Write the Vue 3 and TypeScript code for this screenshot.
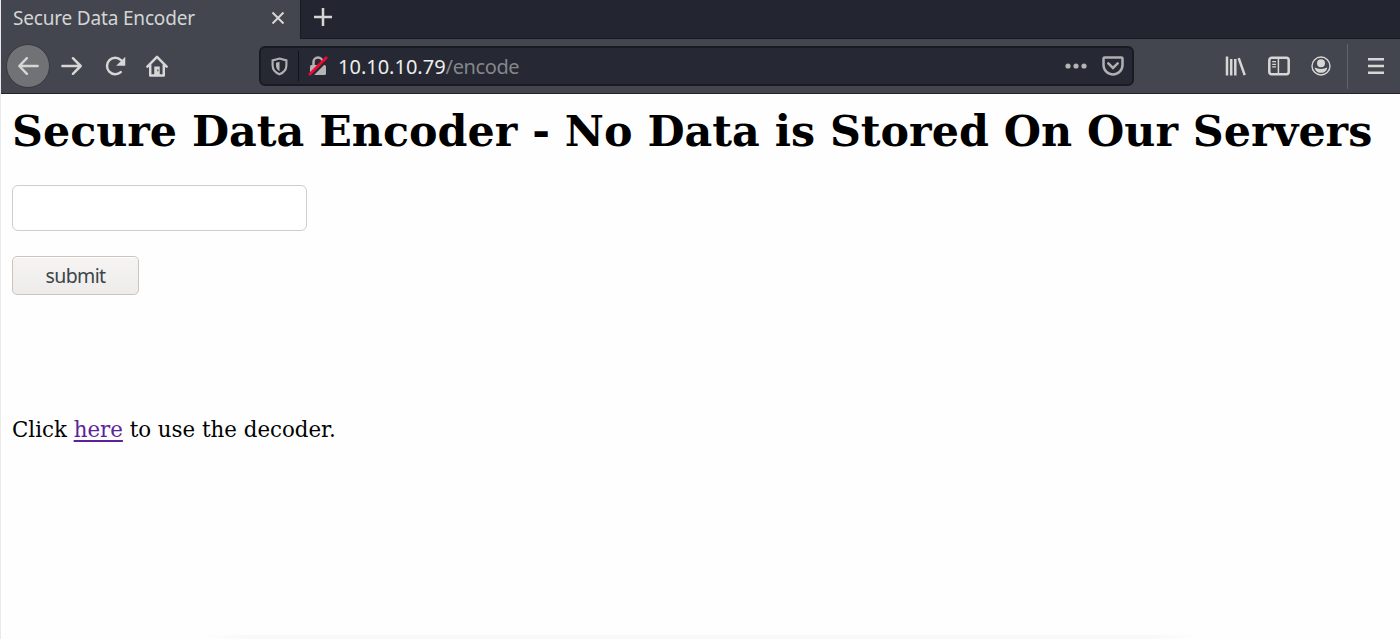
<script setup lang="ts">
import { ref } from 'vue';

const pageTitle = 'Secure Data Encoder';
const host = '10.10.10.79';
const path = '/encode';
const payload = ref('');
</script>

<template>
  <div class="window">
    <header class="chrome">
      <div class="tab-bar">
        <div class="tab">
          <span class="tab-title">{{ pageTitle }}</span>
          <svg class="tab-close" viewBox="0 0 14 14">
            <path d="M1.500 1.500l11 11M12.500 1.500l-11 11" />
          </svg>
        </div>
        <div class="tab-rest">
          <svg class="new-tab" viewBox="0 0 20 20">
            <path d="M10 1v18M1 10h18" />
          </svg>
        </div>
      </div>

      <nav class="toolbar">
        <div class="nav-buttons">
          <div class="back">
            <svg class="icon" viewBox="0 0 24 24">
              <path d="M22.500 12H3M10.800 3.500L2.500 12l8.300 8.500" />
            </svg>
          </div>
          <svg class="icon" viewBox="0 0 24 24">
            <path d="M1.500 12H21M13 3.500l8.500 8.500-8.500 8.500" />
          </svg>
          <svg class="icon" viewBox="0 0 24 24">
            <path d="M18.300 18.700A9 9 0 1 1 18.500 5.500" />
            <path class="solid" d="M23.200 1.800v9.900h-9.900z" />
          </svg>
          <svg class="icon home" viewBox="0 0 24 24">
            <path d="M1.500 12.800L12 2l10.500 10.800M4.600 11v11.300h14.800V11" />
            <path class="solid" fill-rule="evenodd" d="M9 12.500h6v9.500H9zM12.300 15.700h1.300v2h-1.300z" />
          </svg>
        </div>

        <div class="url-bar">
          <svg class="shield" viewBox="0 0 18 20">
            <path d="M9 1.600L16.300 3.500v5.200c0 4.600-2.800 7.800-7.300 9.600-4.500-1.800-7.300-5-7.300-9.600V3.500z" />
            <path class="solid" d="M9 5v10c-2.600-1.500-3.700-3.500-3.700-6.300V6z" />
          </svg>
          <span class="url-divider"></span>
          <svg class="lock" viewBox="0 0 20 20">
            <path class="shackle" d="M5.500 10V6a4.500 4.500 0 0 1 9 0v4" />
            <rect class="solid" x="2" y="9" width="16" height="10" rx="1.500" />
            <path class="gap" d="M2.500 20.500L20.500 2.500" />
            <path class="strike" d="M1 19L19 1" />
          </svg>
          <span class="url"><span class="host">{{ host }}</span>{{ path }}</span>
          <svg class="dots" viewBox="0 0 24 8">
            <circle cx="4" cy="4" r="2.600" />
            <circle cx="12" cy="4" r="2.600" />
            <circle cx="20" cy="4" r="2.600" />
          </svg>
          <svg class="pocket" viewBox="0 0 22 20">
            <path d="M2.600 1.500h16.800q1.100 0 1.100 1.100V9a9.500 9.500 0 0 1-19 0V2.600q0-1.100 1.100-1.100z" />
            <path d="M6.300 7.300L11 12l4.700-4.700" />
          </svg>
        </div>

        <div class="tools">
          <svg class="tool" viewBox="0 0 22 20">
            <path d="M2 .5v19M6.200 3v16.500M10.300 3v16.500" />
            <path d="M13.700 2.200l6 17" />
          </svg>
          <svg class="tool" viewBox="0 0 22 20">
            <rect x="1.300" y="1.700" width="19.400" height="16.600" rx="2.500" />
            <path class="pane" d="M10.400 2v16" />
            <path class="lines" d="M4.200 5.700H8M4.200 8.300H8M4.200 10.900H8" />
          </svg>
          <svg class="tool account" viewBox="0 0 22 20">
            <circle cx="11" cy="10" r="9" />
            <circle class="solid" cx="11" cy="7.200" r="4" />
            <path class="solid" d="M4.800 11.400c2 .7 3.500 1.500 6.200 1.500s4.200-.8 6.200-1.500c0 3-2.600 5.400-6.200 5.400s-6.200-2.400-6.200-5.400z" />
          </svg>
        </div>

        <div class="menu">
          <svg class="menu-icon" viewBox="0 0 18 18">
            <path d="M1 2.200h16M1 9h16M1 15.800h16" />
          </svg>
        </div>
      </nav>
    </header>

    <main class="page">
      <h1>Secure Data Encoder - No Data is Stored On Our Servers</h1>
      <form @submit.prevent>
        <input v-model="payload" class="field" type="text" />
        <button class="submit" type="submit">submit</button>
      </form>
      <p class="hint">Click <a href="#">here</a> to use the decoder.</p>
    </main>
    <footer class="edge"></footer>
  </div>
</template>

<style>
body {
  margin: 0;
}
</style>

<style scoped>
.window {
  box-sizing: border-box;
  height: 639px;
  display: flex;
  flex-direction: column;
  overflow: hidden;
  border-left: 1px solid #e9e9eb;
  background: #fefefe;
}

.chrome {
  flex: none;
  font-family: "Noto Sans", "Open Sans", sans-serif;
  background: #43464f;
}

svg {
  display: block;
  flex: none;
  fill: none;
  stroke: #d6d6d4;
  stroke-width: 2.5;
}

.tab-bar {
  display: flex;
  height: 40px;
}

.tab {
  box-sizing: border-box;
  width: 299px;
  padding: 0 15px 4px 12px;
  display: flex;
  align-items: center;
  justify-content: space-between;
}

.tab-title {
  color: #d4d5d5;
  font-size: 19px;
  letter-spacing: -0.18px;
  line-height: 26px;
  white-space: nowrap;
}

.tab-close {
  width: 14px;
  height: 14px;
  stroke-width: 2;
}

.tab-rest {
  box-sizing: border-box;
  flex: 1;
  height: 39px;
  padding: 7px 0 0 12px;
  background: #232530;
  border-left: 1px solid #181a20;
  border-bottom: 1px solid #181a20;
}

.new-tab {
  width: 20px;
  height: 20px;
}

.toolbar {
  box-sizing: border-box;
  height: 54px;
  padding: 4px 0 5px 5px;
  display: flex;
  align-items: center;
  border-bottom: 1px solid #22232b;
}

.nav-buttons {
  width: 253px;
  display: flex;
  align-items: center;
  gap: 21px;
}

.back {
  box-sizing: border-box;
  width: 44px;
  height: 44px;
  margin-right: -10px;
  display: grid;
  place-items: center;
  border: 1px solid #373941;
  border-radius: 50%;
  background: #717275;
}

.icon {
  width: 22px;
  height: 22px;
  stroke-width: 2.7;
  stroke-linecap: round;
  stroke-linejoin: round;
}

.home {
  margin-left: -1px;
}

.solid {
  fill: #d6d6d4;
  stroke: none;
}

.url-bar {
  box-sizing: border-box;
  width: 875px;
  height: 40px;
  padding: 0 8px 0 10px;
  display: flex;
  align-items: center;
  background: #262833;
  border: 2px solid #191b22;
  border-radius: 6px;
}

.url-bar svg {
  stroke: #afb0b2;
}

.url-bar .solid {
  fill: #b4b4b5;
  stroke: none;
}

.shield {
  width: 17px;
  height: 19px;
  stroke-width: 2.3;
}

.url-divider {
  width: 1px;
  height: 30px;
  margin: 0 9px 0 10px;
  background: #121319;
}

.lock {
  width: 20px;
  height: 20px;
}

.url-bar .gap {
  stroke: #262833;
  stroke-width: 3;
}

.url-bar .strike {
  stroke: #f30735;
  stroke-width: 2.7;
}

.url {
  flex: 1;
  margin-left: 10px;
  padding-top: 2px;
  color: #85868b;
  font-size: 20px;
  letter-spacing: -0.4px;
  line-height: 28px;
}

.host {
  color: #eeeeec;
  letter-spacing: 0;
}

.dots {
  width: 24px;
  height: 8px;
}

.dots circle {
  fill: #b4b4b5;
  stroke: none;
}

.pocket {
  width: 22px;
  height: 20px;
  margin-left: 14px;
  stroke-linecap: round;
}

.tools {
  display: flex;
  gap: 20.5px;
  margin-left: 91px;
}

.tool {
  width: 22px;
  height: 20px;
}

.pane {
  stroke-width: 1.5;
}

.lines {
  stroke-width: 1.2;
}

.account {
  stroke-width: 1.4;
}

.menu {
  height: 45px;
  margin-left: 15px;
  padding-left: 19px;
  display: flex;
  align-items: center;
  border-left: 1px solid #606372;
}

.menu-icon {
  width: 18px;
  height: 18px;
}

.page {
  flex: 1;
  padding: 12px 11px 0;
  color: #000;
  font-family: "DejaVu Serif", serif;
}

h1 {
  margin: 0 0 29px;
  font-size: 42.8px;
  line-height: 50px;
  white-space: nowrap;
}

form {
  display: flex;
  flex-direction: column;
  align-items: flex-start;
  gap: 25px;
}

.field {
  box-sizing: border-box;
  width: 295px;
  height: 46px;
  padding: 0 10px;
  border: 1px solid #d2cbc6;
  border-radius: 6px;
  outline: none;
  background: #fff;
  font-size: 20px;
}

.submit {
  box-sizing: border-box;
  width: 127px;
  height: 39px;
  padding: 0;
  border: 1px solid #cec3bb;
  border-radius: 5px;
  background: linear-gradient(#f5f4f3, #eeeceb);
  box-shadow: inset 0 1px #fff;
  color: #3c4549;
  font-family: "Noto Sans", sans-serif;
  font-size: 19.5px;
  letter-spacing: -0.6px;
  line-height: 28px;
}

.hint {
  margin: 121px 0 0;
  font-size: 21.35px;
  line-height: 28px;
}

.hint a {
  color: #5c2397;
  text-decoration-thickness: 1.5px;
  text-underline-offset: 3px;
}

/* soft shadow rising from the bottom edge */
.edge {
  height: 4px;
  margin: 0 202px;
  box-shadow: 0 4px 10px rgba(0, 0, 0, 0.04);
  background: linear-gradient(90deg, transparent, #f8f8f8 5%, #f8f8f8 95%, transparent);
}
</style>
